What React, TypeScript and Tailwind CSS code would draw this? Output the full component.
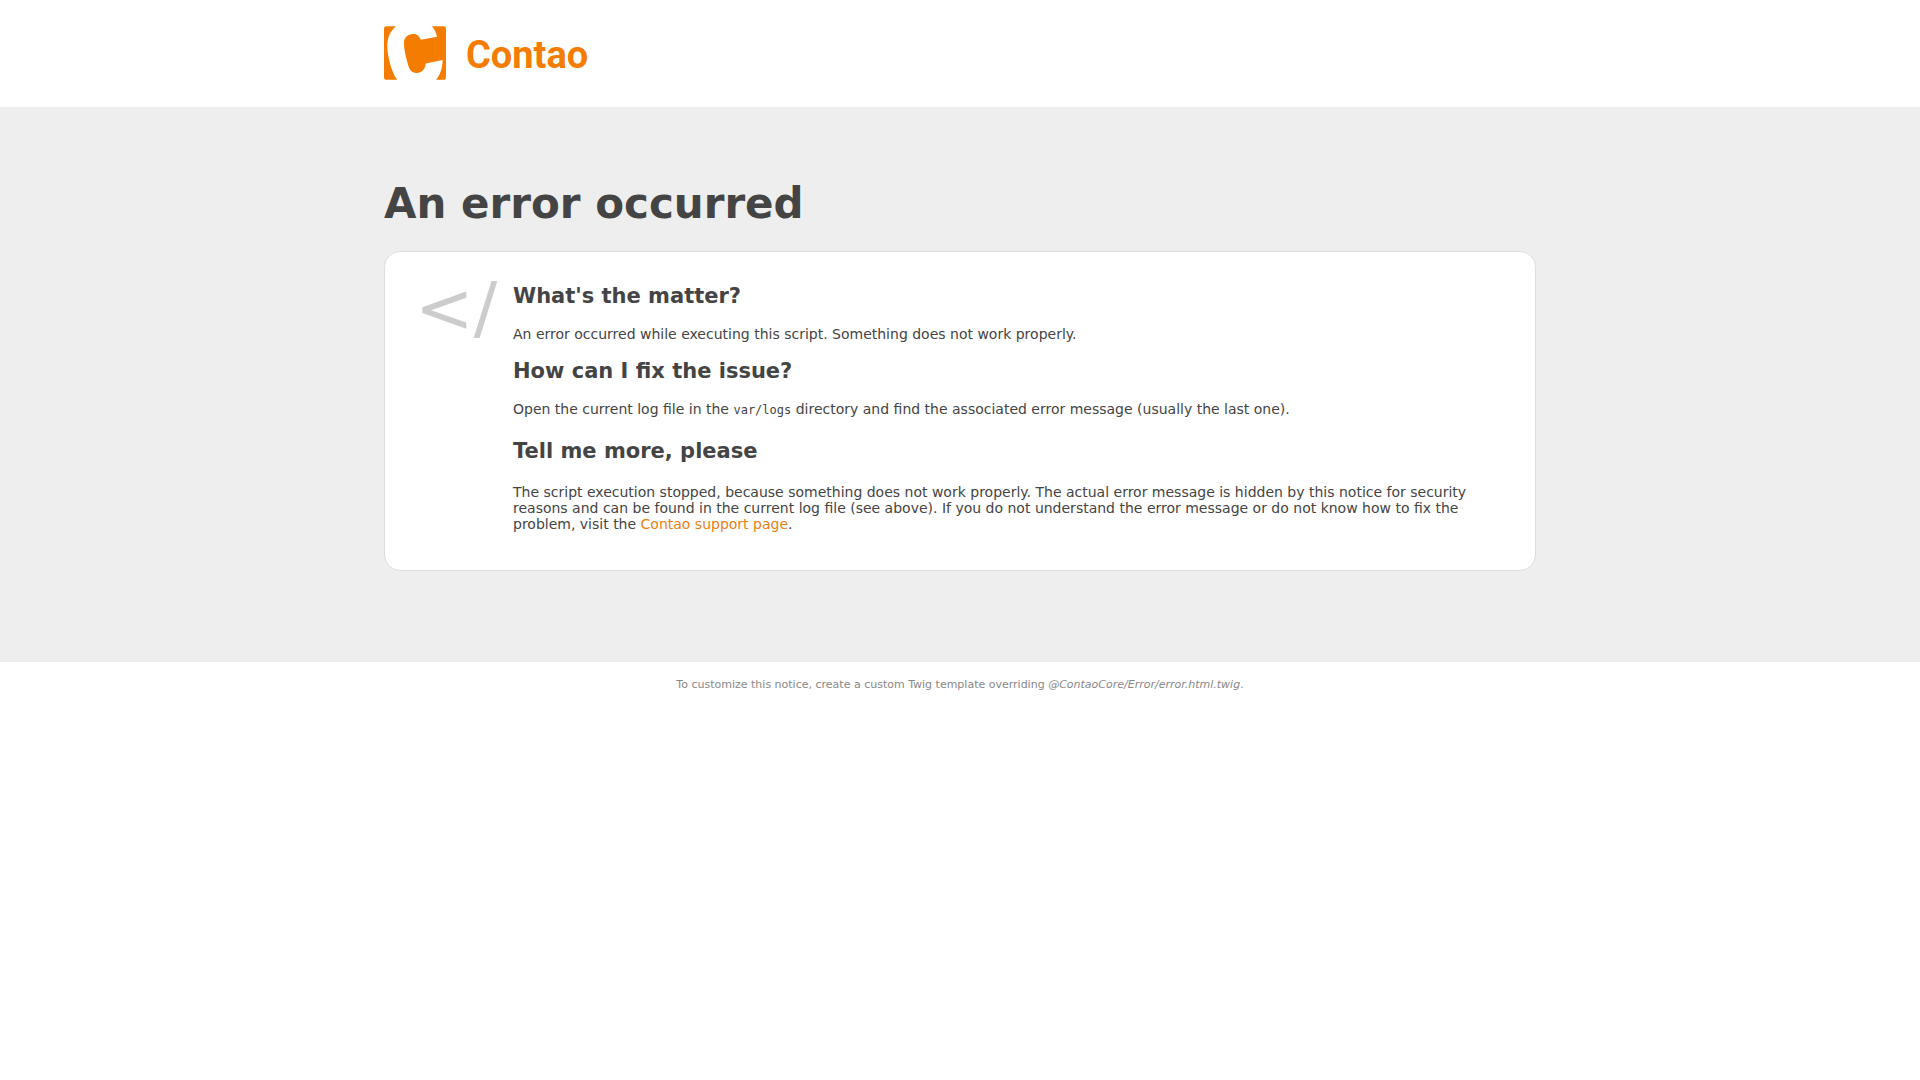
import type { ReactNode } from "react";

const SUPPORT_URL = "https://to.contao.org/support";

function ContaoLogo() {
  return (
    <div className="flex items-center gap-5 text-[#f47c00]">
      <svg
        viewBox="0 0 187 162"
        className="h-[54px] w-[62px]"
        fill="currentColor"
        aria-hidden="true"
      >
        <path d="M8 0H36C18 16 10 35 10 60C10 88 22 140 40 162H8Q0 162 0 154V8Q0 0 8 0Z" />
        <path d="M144 0H179Q187 0 187 8V154Q187 162 179 162H157C169 148 176 128 177 102L126 113C124 131 114 141 98 141C84 141 77 132 73 118C67 96 60 72 60 50C60 33 74 24 88 24C100 24 106 30 111 41L160 32C157 18 152 8 144 0Z" />
      </svg>
      <span className="pt-1 font-['Roboto',sans-serif] text-[38px] leading-[50px] font-bold">
        Contao
      </span>
    </div>
  );
}

function Heading({ children }: { children: ReactNode }) {
  return <h2 className="text-[21px] leading-6 font-bold">{children}</h2>;
}

export default function App() {
  return (
    <div className="font-['DejaVu_Sans',sans-serif] text-sm leading-4 text-[#444]">
      <header className="bg-white">
        <div className="mx-auto w-3/5 pt-[26px] pb-[27px]">
          <ContaoLogo />
        </div>
      </header>

      <main className="bg-[#eee]">
        <div className="mx-auto w-3/5 pt-[73px] pb-[91px]">
          <h1 className="text-[42px] leading-[48px] font-bold">An error occurred</h1>

          <div className="mt-[23px] flex rounded-2xl border border-[#ddd] bg-white pr-[38px] pb-[38px] pl-[30px]">
            <div
              className="w-[98px] shrink-0 pt-[21px] text-[70px] leading-[70px] text-[#ccc]"
              aria-hidden="true"
            >
              {"</"}
            </div>

            <div className="pt-8">
              <Heading>What's the matter?</Heading>
              <p className="mt-[18px] mb-[17px]">
                An error occurred while executing this script. Something does not work properly.
              </p>

              <Heading>How can I fix the issue?</Heading>
              <p className="mt-[18px] mb-[22px]">
                Open the current log file in the{" "}
                <code className="font-['DejaVu_Sans_Mono',monospace] text-xs leading-none">
                  var/logs
                </code>{" "}
                directory and find the associated error message (usually the last one).
              </p>

              <Heading>Tell me more, please</Heading>
              <p className="mt-[21px]">
                The script execution stopped, because something does not work properly. The actual
                error message is hidden by this notice for security reasons and can be found in the
                current log file (see above). If you do not understand the error message or do not
                know how to fix the problem, visit the{" "}
                <a href={SUPPORT_URL} className="text-[#e77f14] hover:underline">
                  Contao support page
                </a>
                .
              </p>
            </div>
          </div>
        </div>
      </main>

      <footer className="py-4 text-center text-[11px] leading-[13px] text-[#888]">
        To customize this notice, create a custom Twig template overriding{" "}
        <em>@ContaoCore/Error/error.html.twig</em>.
      </footer>
    </div>
  );
}
